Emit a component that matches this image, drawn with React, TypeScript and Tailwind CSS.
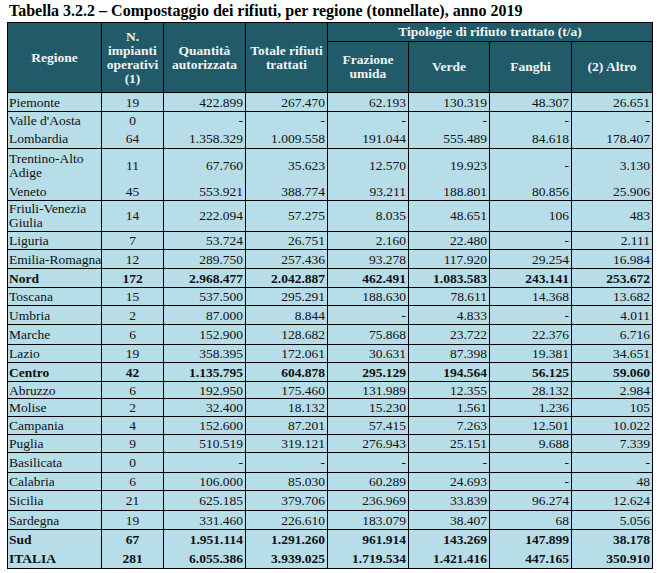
import React from "react";

type Row = { name: string; n: string; v: string[]; bold?: boolean; h: number; noBottom?: boolean; two?: boolean };

const rows: Row[] = [
  { name: "Piemonte", n: "19", v: ["422.899", "267.470", "62.193", "130.319", "48.307", "26.651"], h: 19 },
  { name: "Valle d'Aosta", n: "0", v: ["-", "-", "-", "-", "-", "-"], h: 18, noBottom: true },
  { name: "Lombardia", n: "64", v: ["1.358.329", "1.009.558", "191.044", "555.489", "84.618", "178.407"], h: 19 },
  { name: "Trentino-Alto Adige", n: "11", v: ["67.760", "35.623", "12.570", "19.923", "-", "3.130"], h: 34, noBottom: true, two: true },
  { name: "Veneto", n: "45", v: ["553.921", "388.774", "93.211", "188.801", "80.856", "25.906"], h: 18 },
  { name: "Friuli-Venezia Giulia", n: "14", v: ["222.094", "57.275", "8.035", "48.651", "106", "483"], h: 31, two: true },
  { name: "Liguria", n: "7", v: ["53.724", "26.751", "2.160", "22.480", "-", "2.111"], h: 18 },
  { name: "Emilia-Romagna", n: "12", v: ["289.750", "257.436", "93.278", "117.920", "29.254", "16.984"], h: 19 },
  { name: "Nord", n: "172", v: ["2.968.477", "2.042.887", "462.491", "1.083.583", "243.141", "253.672"], h: 19, bold: true },
  { name: "Toscana", n: "15", v: ["537.500", "295.291", "188.630", "78.611", "14.368", "13.682"], h: 18 },
  { name: "Umbria", n: "2", v: ["87.000", "8.844", "-", "4.833", "-", "4.011"], h: 19 },
  { name: "Marche", n: "6", v: ["152.900", "128.682", "75.868", "23.722", "22.376", "6.716"], h: 20 },
  { name: "Lazio", n: "19", v: ["358.395", "172.061", "30.631", "87.398", "19.381", "34.651"], h: 18 },
  { name: "Centro", n: "42", v: ["1.135.795", "604.878", "295.129", "194.564", "56.125", "59.060"], h: 19, bold: true },
  { name: "Abruzzo", n: "6", v: ["192.950", "175.460", "131.989", "12.355", "28.132", "2.984"], h: 17 },
  { name: "Molise", n: "2", v: ["32.400", "18.132", "15.230", "1.561", "1.236", "105"], h: 18 },
  { name: "Campania", n: "4", v: ["152.600", "87.201", "57.415", "7.263", "12.501", "10.022"], h: 18 },
  { name: "Puglia", n: "9", v: ["510.519", "319.121", "276.943", "25.151", "9.688", "7.339"], h: 18 },
  { name: "Basilicata", n: "0", v: ["-", "-", "-", "-", "-", "-"], h: 20 },
  { name: "Calabria", n: "6", v: ["106.000", "85.030", "60.289", "24.693", "-", "48"], h: 18 },
  { name: "Sicilia", n: "21", v: ["625.185", "379.706", "236.969", "33.839", "96.274", "12.624"], h: 20 },
  { name: "Sardegna", n: "19", v: ["331.460", "226.610", "183.079", "38.407", "68", "5.056"], h: 19 },
  { name: "Sud", n: "67", v: ["1.951.114", "1.291.260", "961.914", "143.269", "147.899", "38.178"], h: 20, bold: true, noBottom: true },
  { name: "ITALIA", n: "281", v: ["6.055.386", "3.939.025", "1.719.534", "1.421.416", "447.165", "350.910"], h: 19, bold: true },
];

const widths = [94, 62, 82, 82, 81, 81, 82, 81];

export default function App() {
  return (
    <div className="w-[657px] h-[573px] bg-white overflow-hidden" style={{ fontFamily: '"Liberation Serif", serif' }}>
      <div className="h-[22px] pl-[9px] pt-[1px] text-[16px] leading-[20px] font-bold text-black whitespace-nowrap">
        Tabella 3.2.2 – Compostaggio dei rifiuti, per regione (tonnellate), anno 2019
      </div>
      <table className="ml-[7px] border-collapse table-fixed border border-black" style={{ width: 645 }}>
        <colgroup>
          {widths.map((w, i) => (
            <col key={i} style={{ width: w }} />
          ))}
        </colgroup>
        <thead>
          <tr className="h-[19px] bg-[#215a68] text-[#f2f4f4] font-bold text-[13.5px] leading-[14px]">
            <th rowSpan={2} className="border border-black align-middle text-center font-bold">Regione</th>
            <th rowSpan={2} className="border border-black align-middle text-center font-bold">
              N.<br />impianti<br />operativi<br />(1)
            </th>
            <th rowSpan={2} className="border border-black align-middle text-center font-bold">
              Quantità<br />autorizzata
            </th>
            <th rowSpan={2} className="border border-black align-middle text-center font-bold">
              Totale rifiuti<br />trattati
            </th>
            <th colSpan={4} className="border border-black align-middle text-center font-bold">
              Tipologie di rifiuto trattato (t/a)
            </th>
          </tr>
          <tr className="h-[51px] bg-[#215a68] text-[#f2f4f4] font-bold text-[13.5px] leading-[14px]">
            <th className="border border-black align-middle text-center font-bold">
              Frazione<br />umida
            </th>
            <th className="border border-black align-middle text-center font-bold">Verde</th>
            <th className="border border-black align-middle text-center font-bold">Fanghi</th>
            <th className="border border-black align-middle text-center font-bold">(2) Altro</th>
          </tr>
        </thead>
        <tbody>
          {rows.map((r) => {
            const b = r.noBottom ? "border-b-0" : "border-b";
            return (
              <tr
                key={r.name}
                className={`bg-[#b7dde8] text-[#111] text-[13.5px] ${r.two ? "leading-[14px]" : "leading-[15px]"} ${r.bold ? "font-bold" : ""}`}
                style={{ height: r.h }}
              >
                <td className={`border-x border-t-0 border-black ${b} pl-[1px] pr-0 align-middle text-left whitespace-nowrap overflow-visible`}>
                  {r.two ? (
                    <>
                      {r.name.split(" ").slice(0, -1).join(" ")}
                      <br />
                      {r.name.split(" ").slice(-1)[0]}
                    </>
                  ) : (
                    r.name
                  )}
                </td>
                <td className={`border-x border-t-0 border-black ${b} align-middle text-center`}>{r.n}</td>
                {r.v.map((x, i) => (
                  <td key={i} className={`border-x border-t-0 border-black ${b} pr-[2px] align-middle text-right whitespace-nowrap`}>
                    {x}
                  </td>
                ))}
              </tr>
            );
          })}
        </tbody>
      </table>
    </div>
  );
}
